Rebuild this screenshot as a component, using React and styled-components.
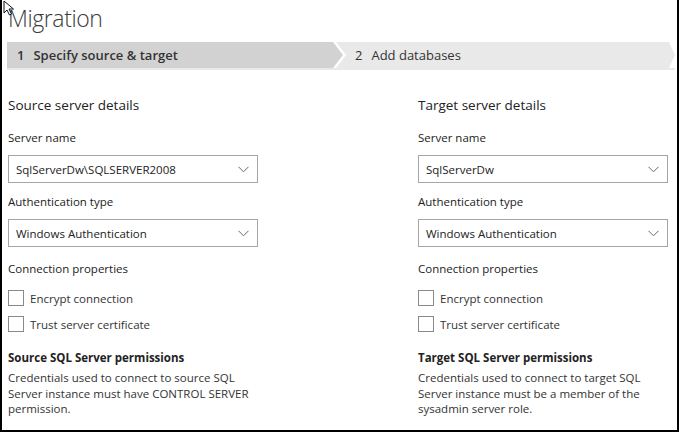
import React from "react";
import styled, { createGlobalStyle } from "styled-components";

const GlobalStyle = createGlobalStyle`
  html, body {
    margin: 0;
    padding: 0;
    background: #ffffff;
  }
  body {
    font-family: "Open Sans", "Noto Sans", "Liberation Sans", sans-serif;
    color: #333333;
  }
  * {
    box-sizing: border-box;
  }
`;

const Frame = styled.div`
  position: relative;
  width: 679px;
  height: 432px;
  overflow: hidden;
  border-left: 2px solid #000;
  border-right: 2px solid #000;
  border-bottom: 2px solid #000;
  padding: 0 0 0 5px;
`;

const Cursor = styled.svg`
  position: absolute;
  top: 0;
  left: 1px;
`;

const Title = styled.h1`
  margin: 0;
  padding: 2px 0 0 1px;
  height: 42px;
  font-family: "Open Sans", "Noto Sans", sans-serif;
  font-weight: 300;
  font-size: 23px;
  letter-spacing: -0.4px;
  color: #3b3b3b;
`;

const Steps = styled.div`
  display: flex;
  height: 28px;
  width: 668px;
  border-bottom: 2px solid #e9e9e9;
`;

const Step = styled.div`
  display: flex;
  align-items: center;
  height: 26px;
  padding-left: ${(p) => (p.$first ? "10px" : "19px")};
  margin-left: ${(p) => (p.$first ? "0" : "-7px")};
  width: ${(p) => p.$width}px;
  background: ${(p) => (p.$active ? "#d2d2d2" : "#e9e9e9")};
  font-size: 13px;
  font-weight: ${(p) => (p.$active ? 600 : 400)};
  color: #333;
  clip-path: ${(p) =>
    p.$first
      ? "polygon(0 0, calc(100% - 10px) 0, 100% 50%, calc(100% - 10px) 100%, 0 100%)"
      : "polygon(0 0, calc(100% - 6px) 0, 100% 50%, calc(100% - 6px) 100%, 0 100%, 10px 50%)"};
`;

const StepNum = styled.span`
  margin-right: 9px;
`;

const Columns = styled.div`
  display: grid;
  grid-template-columns: 250px 250px;
  column-gap: 160px;
  padding: 26px 0 0 1px;
`;

const Column = styled.div`
  display: flex;
  flex-direction: column;
`;

const Heading = styled.div`
  font-size: 13.5px;
  color: #222;
  line-height: 18px;
  margin-bottom: 16px;
`;

const Label = styled.div`
  font-size: 11.5px;
  line-height: 16px;
  color: #222;
  margin-bottom: ${(p) => p.$gap || 9}px;
`;

const Select = styled.div`
  display: flex;
  align-items: center;
  justify-content: space-between;
  height: 28px;
  border: 1px solid #a6a6a6;
  padding: 0 8px 0 7px;
  font-size: 11.5px;
  color: #222;
  margin-bottom: 11px;
`;

const CheckRow = styled.label`
  display: flex;
  align-items: center;
  gap: 6px;
  height: 16px;
  font-size: 11.5px;
  color: #333;
  margin-bottom: 10px;
`;

const Box = styled.span`
  width: 16px;
  height: 16px;
  border: 1px solid #8a8a8a;
  background: #fff;
`;

const Props = styled.div`
  display: flex;
  flex-direction: column;
  padding-top: 3px;
`;

const PermTitle = styled.div`
  font-size: 11.5px;
  font-weight: 700;
  color: #222;
  line-height: 16px;
  margin-top: 8px;
`;

const PermText = styled.div`
  font-size: 11.5px;
  line-height: 15.5px;
  color: #333;
  width: 245px;
  margin-top: 4px;
`;

const Chevron = () => (
  <svg width="11" height="7" viewBox="0 0 11 7">
    <path d="M0.5 0.8 L5.5 5.8 L10.5 0.8" fill="none" stroke="#666" strokeWidth="1" />
  </svg>
);

const Panel = ({ title, server, perm, permText }) => (
  <Column>
    <Heading>{title}</Heading>
    <Label>Server name</Label>
    <Select>
      <span>{server}</span>
      <Chevron />
    </Select>
    <Label>Authentication type</Label>
    <Select>
      <span>Windows Authentication</span>
      <Chevron />
    </Select>
    <Props>
      <Label $gap={13}>Connection properties</Label>
      <CheckRow>
        <Box />
        Encrypt connection
      </CheckRow>
      <CheckRow>
        <Box />
        Trust server certificate
      </CheckRow>
    </Props>
    <PermTitle>{perm}</PermTitle>
    <PermText>{permText}</PermText>
  </Column>
);

export default function App() {
  return (
    <Frame>
      <GlobalStyle />
      <Cursor width="13" height="16" viewBox="0 0 13 16">
        <path d="M1 1 L1 13 L4 10 L6.5 15 L8.5 14 L6 9 L10.5 9 Z" fill="#fff" stroke="#111" strokeWidth="1" />
      </Cursor>
      <Title>Migration</Title>
      <Steps>
        <Step $first $active $width={336}>
          <StepNum>1</StepNum>Specify source &amp; target
        </Step>
        <Step $width={339}>
          <StepNum>2</StepNum>Add databases
        </Step>
      </Steps>
      <Columns>
        <Panel
          title="Source server details"
          server="SqlServerDw\SQLSERVER2008"
          perm="Source SQL Server permissions"
          permText="Credentials used to connect to source SQL Server instance must have CONTROL SERVER permission."
        />
        <Panel
          title="Target server details"
          server="SqlServerDw"
          perm="Target SQL Server permissions"
          permText="Credentials used to connect to target SQL Server instance must be a member of the sysadmin server role."
        />
      </Columns>
    </Frame>
  );
}
